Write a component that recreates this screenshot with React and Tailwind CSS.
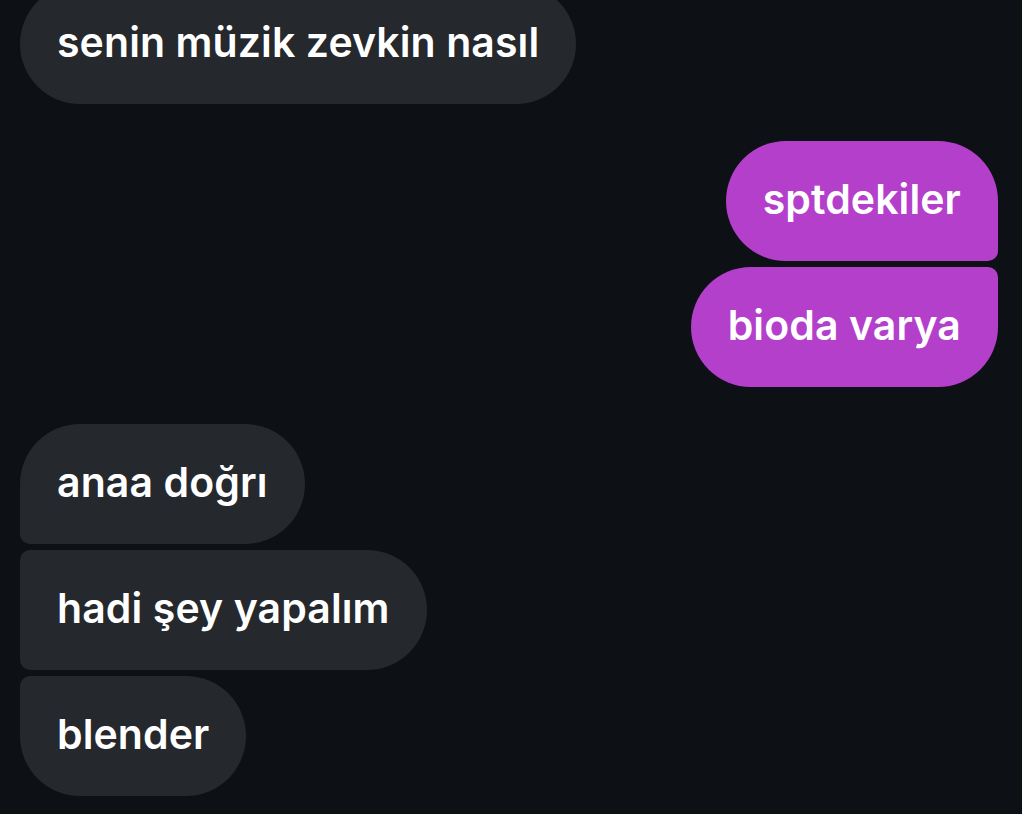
import React from "react";

const messages = [
  { id: 1, text: "senin müzik zevkin nasıl", mine: false, shape: "rounded-[60px]", gapTop: "" },
  { id: 2, text: "sptdekiler", mine: true, shape: "rounded-[60px] rounded-br-[10px]", gapTop: "mt-[37px]" },
  { id: 3, text: "bioda varya", mine: true, shape: "rounded-[60px] rounded-tr-[10px]", gapTop: "mt-[6px]" },
  { id: 4, text: "anaa doğrı", mine: false, shape: "rounded-[60px] rounded-bl-[10px]", gapTop: "mt-[37px]" },
  { id: 5, text: "hadi şey yapalım", mine: false, shape: "rounded-[60px] rounded-tl-[10px] rounded-bl-[10px]", gapTop: "mt-[6px]" },
  { id: 6, text: "blender", mine: false, shape: "rounded-[60px] rounded-tl-[10px]", gapTop: "mt-[6px]" },
];

function Bubble({ msg }) {
  return (
    <div className={`flex ${msg.mine ? "justify-end" : "justify-start"} ${msg.gapTop}`}>
      <div
        className={`h-[120px] flex items-center px-[37px] pb-[4px] text-white text-[41px] font-semibold tracking-[0.1px] leading-none ${msg.shape} ${
          msg.mine ? "bg-[#b33fcb]" : "bg-[#25282c]"
        }`}
      >
        {msg.text}
      </div>
    </div>
  );
}

export default function App() {
  return (
    <div
      className="w-[1022px] h-[814px] overflow-hidden bg-[#0d1014]"
      style={{ fontFamily: "Inter, 'Noto Sans', sans-serif" }}
    >
      <div className="flex flex-col pl-[20px] pr-[24px] -mt-[16px]">
        {messages.map((m) => (
          <Bubble key={m.id} msg={m} />
        ))}
      </div>
    </div>
  );
}
